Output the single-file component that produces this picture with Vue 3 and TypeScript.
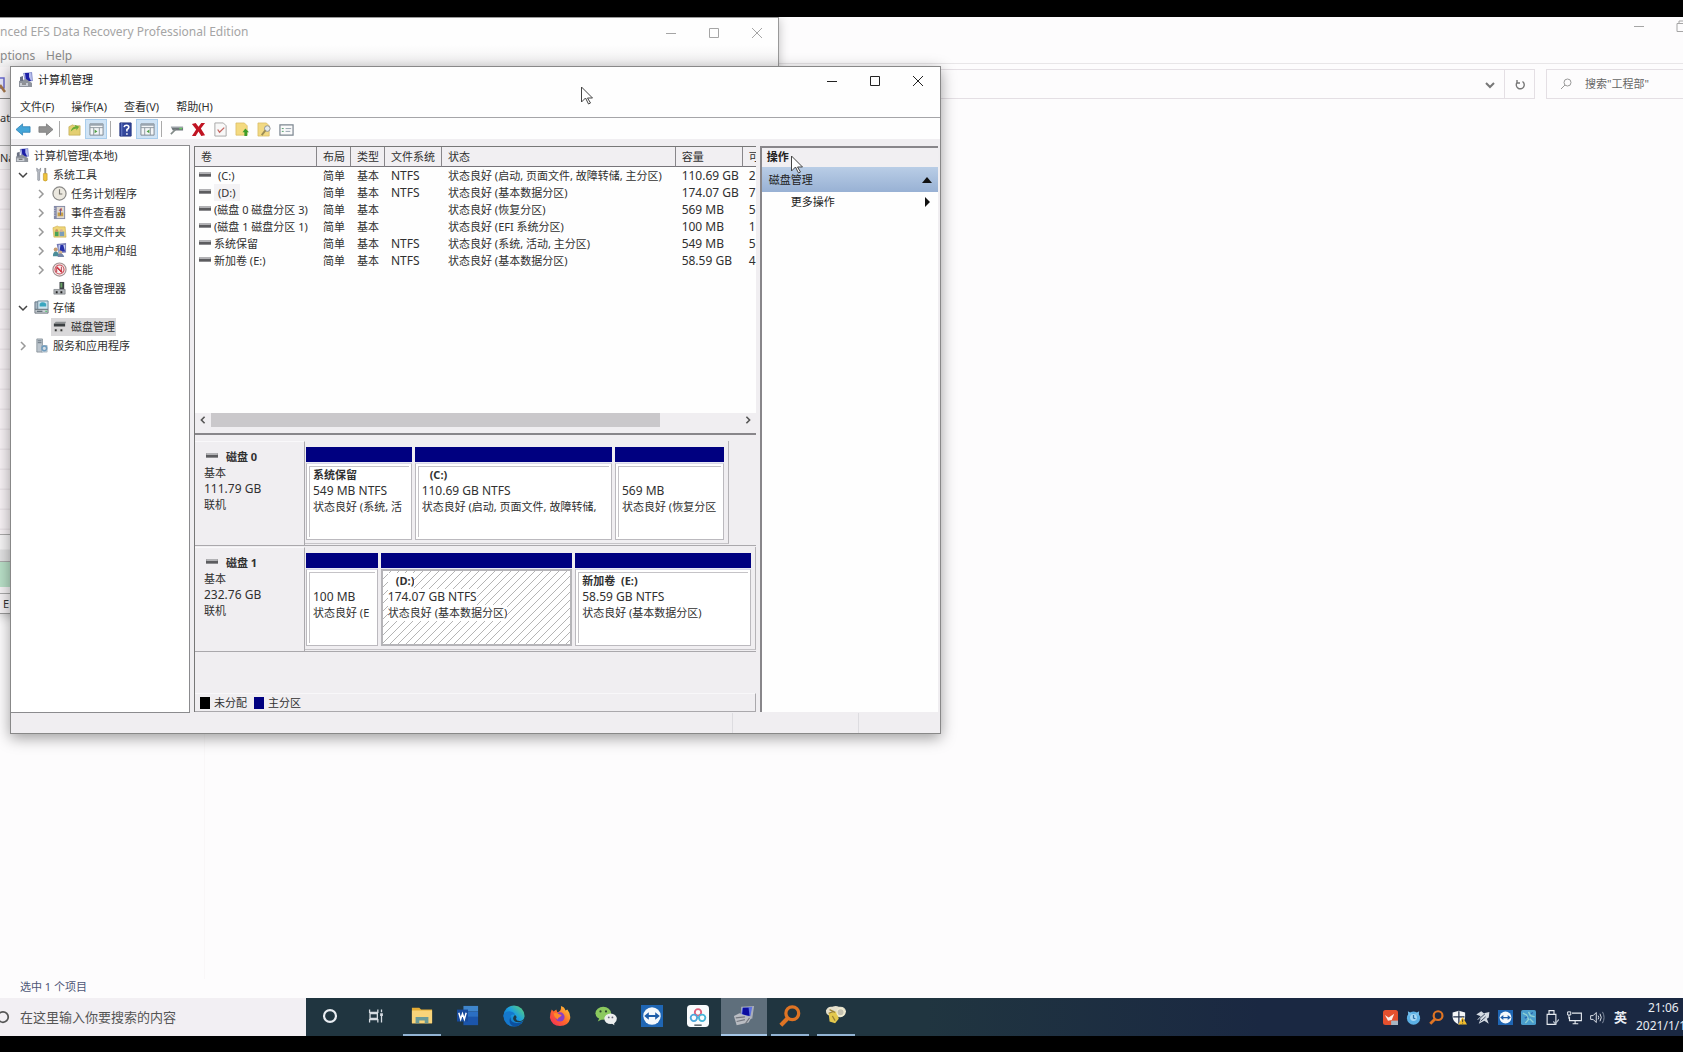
<script setup lang="ts">
interface TreeNode { label: string; icon: string; level: number; state: 'open' | 'closed' | 'none'; selected?: boolean }
interface Volume { name: string; indent?: boolean; hot?: boolean; fs: string; status: string; size: string; free: string }
interface Partition { title: string; pad?: boolean; size: string; status: string; weight: number; selected?: boolean }
interface Disk { name: string; size: string; width: string; parts: Partition[] }
interface App { name: string; icon: string; state?: 'running' | 'active' }

const tree: TreeNode[] = [
  { label: '计算机管理(本地)', icon: 'i-mgmt', level: 0, state: 'none' },
  { label: '系统工具', icon: 'i-tools', level: 1, state: 'open' },
  { label: '任务计划程序', icon: 'i-clock', level: 2, state: 'closed' },
  { label: '事件查看器', icon: 'i-event', level: 2, state: 'closed' },
  { label: '共享文件夹', icon: 'i-share', level: 2, state: 'closed' },
  { label: '本地用户和组', icon: 'i-users', level: 2, state: 'closed' },
  { label: '性能', icon: 'i-perf', level: 2, state: 'closed' },
  { label: '设备管理器', icon: 'i-device', level: 2, state: 'none' },
  { label: '存储', icon: 'i-storage', level: 1, state: 'open' },
  { label: '磁盘管理', icon: 'i-diskmgmt', level: 2, state: 'none', selected: true },
  { label: '服务和应用程序', icon: 'i-services', level: 1, state: 'closed' },
]

const volumes: Volume[] = [
  { name: '(C:)', indent: true, fs: 'NTFS', status: '状态良好 (启动, 页面文件, 故障转储, 主分区)', size: '110.69 GB', free: '2' },
  { name: '(D:)', indent: true, hot: true, fs: 'NTFS', status: '状态良好 (基本数据分区)', size: '174.07 GB', free: '7' },
  { name: '(磁盘 0 磁盘分区 3)', fs: '', status: '状态良好 (恢复分区)', size: '569 MB', free: '5' },
  { name: '(磁盘 1 磁盘分区 1)', fs: '', status: '状态良好 (EFI 系统分区)', size: '100 MB', free: '1' },
  { name: '系统保留', fs: 'NTFS', status: '状态良好 (系统, 活动, 主分区)', size: '549 MB', free: '5' },
  { name: '新加卷 (E:)', fs: 'NTFS', status: '状态良好 (基本数据分区)', size: '58.59 GB', free: '4' },
]

const disks: Disk[] = [
  {
    name: '磁盘 0', size: '111.79 GB', width: '94%',
    parts: [
      { title: '系统保留', size: '549 MB NTFS', status: '状态良好 (系统, 活', weight: 106 },
      { title: '(C:)', pad: true, size: '110.69 GB NTFS', status: '状态良好 (启动, 页面文件, 故障转储,', weight: 198 },
      { title: '', size: '569 MB', status: '状态良好 (恢复分区', weight: 109 },
    ],
  },
  {
    name: '磁盘 1', size: '232.76 GB', width: '100%',
    parts: [
      { title: '', size: '100 MB', status: '状态良好 (E', weight: 72 },
      { title: '(D:)', pad: true, size: '174.07 GB NTFS', status: '状态良好 (基本数据分区)', weight: 192, selected: true },
      { title: '新加卷\u00a0 (E:)', size: '58.59 GB NTFS', status: '状态良好 (基本数据分区)', weight: 176 },
    ],
  },
]

const apps: App[] = [
  { name: 'Cortana', icon: 'i-cortana' },
  { name: '任务视图', icon: 'i-taskview' },
  { name: '文件资源管理器', icon: 'i-explorer', state: 'running' },
  { name: 'Word', icon: 'i-word' },
  { name: 'Edge', icon: 'i-edge' },
  { name: 'Firefox', icon: 'i-firefox' },
  { name: '微信', icon: 'i-wechat' },
  { name: 'TeamViewer', icon: 'i-teamviewer' },
  { name: '网盘', icon: 'i-netdisk' },
  { name: '计算机管理', icon: 'i-mgmt-task', state: 'active' },
  { name: '搜索', icon: 'i-everything', state: 'running' },
  { name: '数据恢复', icon: 'i-keys', state: 'running' },
]

const tray: string[] = ['i-t-red', 'i-t-bird', 'i-everything', 'i-t-shield', 'i-t-gear', 'i-teamviewer', 'i-t-map', 'i-t-usb', 'i-t-net', 'i-t-sound']
const menus: string[] = ['文件(F)', '操作(A)', '查看(V)', '帮助(H)']
</script>

<template>
  <div class="screen">
    <svg class="defs" aria-hidden="true">
      <defs>
        <linearGradient id="g-edge" x1="0" y1="1" x2="1" y2="0"><stop offset="0" stop-color="#0a58b8" /><stop offset=".55" stop-color="#1b9de0" /><stop offset="1" stop-color="#63d86a" /></linearGradient>
        <linearGradient id="g-fox" x1="0" y1="1" x2="1" y2="0"><stop offset="0" stop-color="#f0245e" /><stop offset=".5" stop-color="#ff6a2a" /><stop offset="1" stop-color="#ffd83a" /></linearGradient>
        <pattern id="g-hatch" width="8" height="8" patternUnits="userSpaceOnUse"><path d="M-1 9L9 -1M-1 1L1 -1M7 9L9 7" stroke="#b4b4b4" stroke-width="1" /></pattern>
      </defs>
      <symbol id="i-mgmt" viewBox="0 0 16 16">
        <path d="M5 1l9-1 1 9-8 1z" fill="#8e96cf" /><path d="M6 2l7-1 1 7-6 1z" fill="#b9c0ee" /><path d="M7 1h4v4l2 4H8z" fill="#1c1fa6" />
        <path d="M1 9l7-2 6 4v4H1z" fill="#8f949c" /><path d="M2 11h8v3H2z" fill="#c9cdd3" /><path d="M2 5l3-1v5H2z" fill="#6a7182" /><path d="M4 12h4" stroke="#555" />
      </symbol>
      <symbol id="i-tools" viewBox="0 0 16 16">
        <path d="M3 1v3l1 2v8q1 1 2 0V6l1-2V1L6 3H4z" fill="#b9bec6" stroke="#82878f" stroke-width=".7" /><path d="M11 1h2v6h-2z" fill="#909090" /><path d="M10 7h4v7q-2 2-4 0z" fill="#efc33c" stroke="#b88d20" stroke-width=".6" />
      </symbol>
      <symbol id="i-clock" viewBox="0 0 16 16"><circle cx="8" cy="8" r="7" fill="#ebe8df" stroke="#8b8a88" stroke-width="1.3" /><path d="M8 3.500V8.500H11" fill="none" stroke="#77756f" stroke-width="1.200" /></symbol>
      <symbol id="i-event" viewBox="0 0 16 16"><path d="M2 1h12v14H2z" fill="#8288a6" /><path d="M5 2h8v12H5z" fill="#ded9d2" /><path d="M3 3v10" stroke="#e8e8f4" stroke-dasharray="1 1.500" /><path d="M7 6l3-3 1 3z" fill="#d75a49" /><path d="M6 8h6v4H6z" fill="#c79f49" /><path d="M9 4v7" stroke="#555c9a" /></symbol>
      <symbol id="i-share" viewBox="0 0 16 16"><path d="M1 4l5-2 1 1h7l1 11H2z" fill="#efd678" stroke="#c9a848" stroke-width=".6" /><path d="M3 8h4v5H3z" fill="#4aa257" /><path d="M8 8h5v5H8z" fill="#7a9cba" /><circle cx="5" cy="7" r="1.500" fill="#c98f62" /><circle cx="10" cy="7" r="1.500" fill="#d8b292" /></symbol>
      <symbol id="i-users" viewBox="0 0 16 16"><path d="M5 1l10-1v10l-8 1z" fill="#7479b4" /><path d="M7 2h7v7H7z" fill="#c7d0f2" /><path d="M9 2h3l2 7H8z" fill="#2630a8" /><circle cx="4" cy="7" r="2.200" fill="#c59b73" /><path d="M1 14q0-5 3-5t4 5z" fill="#4b8d99" /><circle cx="9" cy="10" r="2" fill="#d5b48e" /><path d="M6 15q0-4 3-4t4 4z" fill="#7486a8" /></symbol>
      <symbol id="i-perf" viewBox="0 0 16 16"><circle cx="8" cy="8" r="7" fill="#f7eeee" stroke="#a28f90" stroke-width="1.200" /><circle cx="8" cy="8" r="4.800" fill="none" stroke="#c84a55" stroke-width="1.200" /><path d="M5 11V6l5 5V5" fill="none" stroke="#b93643" /><path d="M5 5l6 6" stroke="#d3323f" stroke-width="1.300" /></symbol>
      <symbol id="i-device" viewBox="0 0 16 16"><path d="M8 1h5v8H8z" fill="#3e4346" /><path d="M9 2h2v5H9z" fill="#68a064" /><path d="M2 9h12v5H2z" fill="#b2b6ba" stroke="#74787c" stroke-width=".7" /><path d="M4 11h2v2H4zM9 11h2v2H9z" fill="#222" /></symbol>
      <symbol id="i-storage" viewBox="0 0 16 16"><path d="M1 2h10v8H1z" fill="#a9b8c4" stroke="#637483" /><path d="M4 1h11v9H4z" fill="#cfe4ee" stroke="#6c8595" /><path d="M6 4q3-3 7 0v3H6z" fill="#39a6bf" /><path d="M1 10h14v4H1z" fill="#c9cfd4" stroke="#6d767e" /><path d="M3 12h6" stroke="#3c4a55" /><path d="M12 12h2" stroke="#3ec35b" /></symbol>
      <symbol id="i-diskmgmt" viewBox="0 0 16 16"><path d="M4 3h11l-1 2H2z" fill="#8c8f92" /><path d="M2 5h12v3H2z" fill="#3c4043" /><path d="M2 10h10v4H2z" fill="#d1d1d1" /><path d="M3 11h2v2H3zM9 11h2v2H9z" fill="#333" /></symbol>
      <symbol id="i-services" viewBox="0 0 16 16"><path d="M3 1h6v14H3z" fill="#bcc5cd" stroke="#7d8891" stroke-width=".8" /><path d="M4 3h4M4 5h4" stroke="#66737e" /><path d="M8 8h6v7H8z" fill="#d4dde4" stroke="#8697a5" stroke-width=".6" /><circle cx="11" cy="11" r="2.500" fill="none" stroke="#6f9cbe" stroke-width="1.600" /></symbol>
      <symbol id="i-drive" viewBox="0 0 12 6"><path d="M1 0h10l1 1v4H0V1z" fill="#5c5c5f" /><path d="M1 0h10l1 2H0z" fill="#b2b2b5" /><path d="M0 4h12v1H0z" fill="#8d8d90" /></symbol>
      <symbol id="i-back" viewBox="0 0 16 16"><path d="M0 8l7-6v3h8v6H7v3z" fill="#44a5d8" stroke="#2a7db2" stroke-width=".8" /></symbol>
      <symbol id="i-fwd" viewBox="0 0 16 16"><path d="M16 8L9 2v3H1v6h8v3z" fill="#929292" stroke="#747474" stroke-width=".8" /></symbol>
      <symbol id="i-up" viewBox="0 0 16 16"><path d="M2 5l4-2 2 1h6v10H2z" fill="#e4cf72" stroke="#b8a04a" stroke-width=".6" /><path d="M4 10q1-5 5-5L8 3l5 2-3 4V7Q7 7 4 10z" fill="#69ac35" /></symbol>
      <symbol id="i-pane" viewBox="0 0 16 16"><path d="M1 2h14v12H1z" fill="#f3f5f7" stroke="#7d8790" /><path d="M1 2h14v2H1z" fill="#9aa5af" /><path d="M5 6v8M11 6v8M1 6h14" stroke="#8e979f" /><path d="M7 10l3-2v4z" fill="#4e9f44" /></symbol>
      <symbol id="i-pane-r" viewBox="0 0 16 16"><path d="M1 2h14v12H1z" fill="#f3f5f7" stroke="#7d8790" /><path d="M1 2h14v2H1z" fill="#9aa5af" /><path d="M5 6v8M11 6v8M1 6h14" stroke="#8e979f" /><path d="M9 10L6 8v4z" fill="#4e9f44" /></symbol>
      <symbol id="i-help" viewBox="0 0 16 16"><path d="M2 1h12v14H2z" fill="#34489d" stroke="#24357f" /><path d="M4 1v14" stroke="#7183cd" /><path d="M6.500 5.500Q7 3.500 9 3.500q2.500 0 2.500 2Q11.500 7 9.500 8v2M9.500 12v1.500" fill="none" stroke="#fff" stroke-width="1.700" /></symbol>
      <symbol id="i-connect" viewBox="0 0 16 16"><path d="M2 5h13v4H4z" fill="#6f767a" /><path d="M2 5h13v1H2z" fill="#b6bcc0" /><path d="M2 13l5-5" stroke="#828a88" stroke-width="1.800" /><path d="M11 7h3" stroke="#67cf63" stroke-width="1.500" /></symbol>
      <symbol id="i-del" viewBox="0 0 16 16"><path d="M1 2l4-1 3 4 3-4h4l-4.500 6L15 14l-4 1-3-5-3 5H1l4.500-7z" fill="#c01422" /></symbol>
      <symbol id="i-page" viewBox="0 0 16 16"><path d="M2 1h9l3 3v11H2z" fill="#f8f8f8" stroke="#a5a5a5" /><path d="M5 8l2 3 5-5" fill="none" stroke="#c56661" stroke-width="1.400" /></symbol>
      <symbol id="i-folderup" viewBox="0 0 16 16"><path d="M1 1h9l3 3v10H1z" fill="#f4da80" stroke="#d5b65a" stroke-width=".7" /><path d="M11 7l4 4h-2v4h-3v-4H8z" fill="#3f9d2a" /></symbol>
      <symbol id="i-folderfind" viewBox="0 0 16 16"><path d="M1 1h9l3 3v11H1z" fill="#f1d983" stroke="#d5b65a" stroke-width=".7" /><circle cx="11" cy="7" r="3" fill="#e4ebef" stroke="#8b8f92" /><path d="M9 9l-4 5" stroke="#9b8c55" stroke-width="2" /></symbol>
      <symbol id="i-list" viewBox="0 0 16 16"><path d="M1 3h14v11H1z" fill="#fafafa" stroke="#7c8690" stroke-width="1.300" /><path d="M3 7h2M3 10h2" stroke="#4d9b65" /><path d="M7 7h6M7 10h5" stroke="#92a0ad" /></symbol>
      <symbol id="i-cursor" viewBox="0 0 12 20"><path d="M1 1v15l4-4 3 6 2-1-3-5h5z" fill="#fff" stroke="#444" stroke-width="1" /></symbol>

      <symbol id="i-cortana" viewBox="0 0 24 24"><circle cx="12" cy="12" r="6.500" fill="none" stroke="#e9edf2" stroke-width="2.400" /></symbol>
      <symbol id="i-taskview" viewBox="0 0 24 24"><path d="M5 5v3h9V5M5 19v-3h9v3M5.500 9.500h8v5h-8zM18 5v3M18 12v7" fill="none" stroke="#d6dce2" stroke-width="1.400" /><path d="M16.500 9h3v3h-3z" fill="#d6dce2" /></symbol>
      <symbol id="i-explorer" viewBox="0 0 24 24"><path d="M1 3h8l2 2h12v15H1z" fill="#e5ad35" /><path d="M1 6h22v14H1z" fill="#f8d47a" /><path d="M5 13h14v7h-4v-3H9v3H5z" fill="#6a9a98" /></symbol>
      <symbol id="i-word" viewBox="0 0 24 24"><path d="M7 1h16v6H7z" fill="#3f86cc" /><path d="M7 7h16v6H7z" fill="#2b6fc3" /><path d="M7 13h16v9H7z" fill="#1b55ab" /><path d="M0 5h12v13H0z" fill="#174a9c" /><path d="M2 8.500l2 7 2-6 2 6 2-7" fill="none" stroke="#fff" stroke-width="1.600" /></symbol>
      <symbol id="i-edge" viewBox="0 0 24 24">
        <circle cx="12" cy="12" r="11.500" fill="url(#g-edge)" />
        <path d="M.5 11Q3 6.500 8 7q5 .5 5 4-4-2-5 2-1 6 6 9.500Q2 25 .5 11z" fill="#1578cc" />
        <path d="M8 13q0 7 8 6.500 3-.5 6-2Q18 24 12 23.500 5 21 8 13z" fill="#0c4f9e" />
        <path d="M13 11q3 2 1 4 1 3 5 2.500 4-1 4.500-5L23 17q-6 3-10 1-4-3 0-7z" fill="#1f3a46" />
      </symbol>
      <symbol id="i-firefox" viewBox="0 0 24 24"><path d="M3 5l2 2 3-2 1 3q5-1 4-7 4 1 5 5l2-1q4 5 3 10-2 8-11 8T1 14q0-5 2-9z" fill="url(#g-fox)" /><circle cx="12" cy="13" r="5" fill="#8b3fc4" /><path d="M5 9q4-1 6 1l3 1-2 2q-3 1-2 3-4-1-5-7z" fill="#ff8a2a" /></symbol>
      <symbol id="i-wechat" viewBox="0 0 24 24"><ellipse cx="9" cy="9" rx="8.500" ry="7" fill="#8bc95e" /><path d="M3 18l2-4 4 1z" fill="#8bc95e" /><ellipse cx="17" cy="15" rx="6.800" ry="5.800" fill="#eceeee" /><path d="M21 22l-3-2 3-2z" fill="#eceeee" /><circle cx="6" cy="7" r="1.200" fill="#2d4a2c" /><circle cx="12" cy="7" r="1.200" fill="#2d4a2c" /><circle cx="15" cy="13.500" r="1" fill="#667" /><circle cx="19" cy="13.500" r="1" fill="#667" /></symbol>
      <symbol id="i-teamviewer" viewBox="0 0 24 24"><path d="M0 0h24v24H0z" fill="#1f66b4" /><circle cx="12" cy="12" r="9.500" fill="#f4f8fc" /><path d="M3.500 12l5-4v3h7V8l5 4-5 4v-3h-7v3z" fill="#1d5ca8" /></symbol>
      <symbol id="i-netdisk" viewBox="0 0 24 24"><rect x="0" y="0" width="24" height="24" rx="4" fill="#f9fbfd" /><g fill="none" stroke-width="2"><circle cx="12" cy="8" r="3.500" stroke="#e0607c" /><circle cx="7.500" cy="14" r="3.500" stroke="#4aa6dc" /><circle cx="16.500" cy="14" r="3.500" stroke="#46b5d8" /></g><path d="M8 22h8" stroke="#44505a" stroke-width="1.500" /></symbol>
      <symbol id="i-mgmt-task" viewBox="0 0 24 24"><path d="M9 2l14-1-2 14-13-1z" fill="#a9adb8" /><path d="M10 3l11-1-2 10-10-1z" fill="#5d71e0" /><path d="M11 3h6l1 9-8-2z" fill="#0b0c9e" /><path d="M1 12l6-3 13 5-3 5-13 3z" fill="#b9bcc2" /><path d="M3 14l10-1M4 18l9-2M13 21l5-7" stroke="#73777f" stroke-width="1.300" /></symbol>
      <symbol id="i-everything" viewBox="0 0 24 24"><circle cx="14.500" cy="9" r="7" fill="none" stroke="#df7424" stroke-width="3.500" /><path d="M10 14l-8 8" stroke="#df7424" stroke-width="4.500" /></symbol>
      <symbol id="i-keys" viewBox="0 0 24 24"><path d="M1 6q2-5 7-4 4-2 7 0 7-1 8 5-1 5-5 6-3 1-5-1H6Q1 11 1 6z" fill="#e4dfcb" /><path d="M4 9l9-2 2 8-4 5-6-2z" fill="#e3c84d" /><circle cx="17" cy="8" r="4" fill="#c4c1b1" stroke="#f1edd2" stroke-width="1.500" /><path d="M5 5l6 3M4 9l6-2M8 12l3 5" stroke="#9c8334" stroke-width="1.400" /></symbol>
      <symbol id="i-t-red" viewBox="0 0 24 24"><rect x="0" y="0" width="24" height="24" rx="4" fill="#e4502e" /><path d="M3 8l6 4 9-6-4 10-6 1z" fill="#fbeee9" /><path d="M13 17h11v7H13z" fill="#a8b6c4" /></symbol>
      <symbol id="i-t-bird" viewBox="0 0 24 24"><circle cx="12" cy="13" r="10.500" fill="#5cb0e4" /><path d="M3 2l7 4-6 4zM21 2l-7 4 6 4z" fill="#74c0ee" /><circle cx="12" cy="12" r="5.500" fill="#a9d8f4" /><path d="M12 8v5l3 1" stroke="#2b6fa8" stroke-width="2" fill="none" /></symbol>
      <symbol id="i-t-shield" viewBox="0 0 24 24"><path d="M11 1l10 3v7q0 8-10 12Q1 19 1 11V4z" fill="#f5f6f8" /><path d="M11 2v20M2 11h18" stroke="#22304a" stroke-width="2" /><path d="M17 11l7 12H10z" fill="#f2bd2c" /><path d="M17 15v4M17 20.500v1" stroke="#333" stroke-width="1.600" /></symbol>
      <symbol id="i-t-gear" viewBox="0 0 24 24"><path d="M2 7l8-5 4 3 9-2-1 9-3 2 3 8-7-5-9 5 3-8-6 2 6-6z" fill="#d4dae2" /><path d="M6 15l10-9M9 18l8-7" stroke="#2b3a55" stroke-width="1.400" /></symbol>
      <symbol id="i-t-map" viewBox="0 0 24 24"><rect x="0" y="0" width="24" height="24" rx="3" fill="#4a9dcc" /><path d="M3 5l6 3 3 7-5 6M12 3l3 6 7 2M14 14l6 6" stroke="#8fd0d4" stroke-width="2.200" fill="none" /><path d="M6 13l4-2M16 6l3-2" stroke="#2a62ae" stroke-width="2" /></symbol>
      <symbol id="i-t-usb" viewBox="0 0 24 24"><path d="M8 1h8v6H8zM5 7h14v16H5z" fill="none" stroke="#e6eaf0" stroke-width="1.800" /><path d="M15 18l3 4 6-7" fill="none" stroke="#b9c2ce" stroke-width="2" /></symbol>
      <symbol id="i-t-net" viewBox="0 0 24 24"><path d="M8 5h15v12H4v-6M13 17v5M9 22h9" fill="none" stroke="#e6eaf0" stroke-width="1.800" /><path d="M1 3h5v5H1zM3 8v6" fill="none" stroke="#e6eaf0" stroke-width="1.600" /></symbol>
      <symbol id="i-t-sound" viewBox="0 0 24 24"><path d="M1 9h4l5-5v16l-5-5H1z" fill="none" stroke="#e6eaf0" stroke-width="1.500" /><path d="M13 9q2 3 0 6M16 6q4 6 0 12" fill="none" stroke="#e6eaf0" stroke-width="1.500" /><path d="M20 3q5 9 0 18" fill="none" stroke="#8792a4" stroke-width="1.500" /></symbol>
    </svg>

    <main class="desktop">
      <section class="explorer" aria-label="文件资源管理器">
        <div class="ex-title">
          <button class="ex-ctl" aria-label="最小化"><svg viewBox="0 0 12 12"><path d="M1 6.500h10" /></svg></button>
          <button class="ex-ctl" aria-label="还原"><svg viewBox="0 0 12 12"><path d="M1 3.500h8v8H1zM3 3V1h8v8H9" /></svg></button>
        </div>
        <div class="ex-nav">
          <div class="address">
            <input class="address-input" aria-label="地址" />
            <button class="nav-btn" aria-label="展开"><svg viewBox="0 0 12 12"><path d="M2 4l4 4 4-4" stroke-width="2" /></svg></button>
            <button class="nav-btn refresh" aria-label="刷新"><svg viewBox="0 0 12 12"><path d="M8.500 2.500A4 4 0 1 1 3 3.500M3 1v3h3" stroke-width="1.400" /></svg></button>
          </div>
          <div class="ex-search">
            <svg viewBox="0 0 12 12"><circle cx="7.500" cy="4.500" r="3.500" /><path d="M5 7l-4 4" /></svg>
            <input placeholder="搜索&quot;工程部&quot;" aria-label="搜索" />
          </div>
        </div>
        <div class="ex-body"><div class="ex-side"></div></div>
        <footer class="ex-status">选中 1 个项目</footer>
      </section>

      <section class="efs" aria-label="EFS Data Recovery">
        <header class="efs-title">
          <span class="efs-name">nced EFS Data Recovery Professional Edition</span>
          <span class="controls">
            <button aria-label="最小化"><svg viewBox="0 0 12 12"><path d="M1 6.500h10" /></svg></button>
            <button aria-label="最大化"><svg viewBox="0 0 12 12"><path d="M1.500 1.500h9v9h-9z" /></svg></button>
            <button aria-label="关闭"><svg viewBox="0 0 12 12"><path d="M1 1l10 10M11 1L1 11" /></svg></button>
          </span>
        </header>
        <nav class="efs-menu"><button class="efs-opt">ptions</button><button>Help</button></nav>
        <div class="efs-tools"><svg viewBox="0 0 6 16"><path d="M0 1h4v10H0" fill="#e8e8fb" stroke="#6a6ad0" stroke-width="1.500" /><path d="M0 8l5 7" stroke="#a5764a" stroke-width="2.500" /></svg></div>
        <div class="efs-row state">ate</div>
        <div class="efs-row head">Na</div>
        <div class="efs-grid"></div>
        <div class="efs-gap"></div>
        <div class="efs-progress"></div>
        <div class="efs-foot">E</div>
      </section>

      <section class="win" aria-label="计算机管理">
        <header class="title">
          <svg class="ico16"><use href="#i-mgmt" /></svg>
          <h1>计算机管理</h1>
          <span class="controls">
            <button aria-label="最小化"><svg viewBox="0 0 12 12"><path d="M1 6.500h10" /></svg></button>
            <button aria-label="最大化"><svg viewBox="0 0 12 12"><path d="M1.500 1.500h9v9h-9z" /></svg></button>
            <button aria-label="关闭"><svg viewBox="0 0 12 12"><path d="M1 1l10 10M11 1L1 11" /></svg></button>
          </span>
        </header>
        <nav class="menu"><button v-for="m in menus" :key="m">{{ m }}</button></nav>
        <div class="tools">
          <button aria-label="后退"><svg><use href="#i-back" /></svg></button>
          <button aria-label="前进"><svg><use href="#i-fwd" /></svg></button>
          <i></i>
          <button aria-label="上一级"><svg><use href="#i-up" /></svg></button>
          <button class="on" aria-label="显示控制台树"><svg><use href="#i-pane-r" /></svg></button>
          <i></i>
          <button aria-label="帮助"><svg><use href="#i-help" /></svg></button>
          <button class="on" aria-label="显示操作窗格"><svg><use href="#i-pane" /></svg></button>
          <i></i>
          <button aria-label="连接"><svg><use href="#i-connect" /></svg></button>
          <button aria-label="删除"><svg><use href="#i-del" /></svg></button>
          <button aria-label="属性"><svg><use href="#i-page" /></svg></button>
          <button aria-label="打开"><svg><use href="#i-folderup" /></svg></button>
          <button aria-label="浏览"><svg><use href="#i-folderfind" /></svg></button>
          <button aria-label="列表"><svg><use href="#i-list" /></svg></button>
        </div>

        <div class="panes">
          <ul class="tree">
            <li v-for="n in tree" :key="n.label" :class="['lv' + n.level, { sel: n.selected }]">
              <button v-if="n.state !== 'none'" class="exp" :class="n.state" :aria-label="n.label">
                <svg viewBox="0 0 10 10"><path :d="n.state === 'open' ? 'M1 3l4 4 4-4' : 'M3 1l4 4-4 4'" /></svg>
              </button>
              <span v-else-if="n.level > 0" class="exp"></span>
              <span class="node"><svg class="ico14"><use :href="'#' + n.icon" /></svg><span>{{ n.label }}</span></span>
            </li>
          </ul>

          <div class="center">
            <div class="list">
              <table>
                <colgroup><col class="c-name" /><col class="c-short" /><col class="c-short" /><col class="c-fs" /><col /><col class="c-size" /><col class="c-free" /></colgroup>
                <thead><tr><th>卷</th><th>布局</th><th>类型</th><th>文件系统</th><th>状态</th><th>容量</th><th>可</th></tr></thead>
                <tbody>
                  <tr v-for="v in volumes" :key="v.name">
                    <td class="name"><svg class="drive"><use href="#i-drive" /></svg><span :class="{ indent: v.indent, hot: v.hot }">{{ v.name }}</span></td>
                    <td>简单</td><td>基本</td><td class="num">{{ v.fs }}</td><td>{{ v.status }}</td><td class="num">{{ v.size }}</td><td class="num">{{ v.free }}</td>
                  </tr>
                </tbody>
              </table>
            </div>
            <div class="hscroll">
              <button aria-label="向左"><svg viewBox="0 0 10 10"><path d="M7 1L3 5l4 4" /></svg></button>
              <div class="track"><div class="thumb"></div></div>
              <button aria-label="向右"><svg viewBox="0 0 10 10"><path d="M3 1l4 4-4 4" /></svg></button>
            </div>
            <div class="split"></div>
            <div class="disks">
              <div v-for="d in disks" :key="d.name" class="disk">
                <div class="disk-label">
                  <div class="disk-name"><svg class="drive"><use href="#i-drive" /></svg><b>{{ d.name }}</b></div>
                  <div>基本</div><div class="num">{{ d.size }}</div><div>联机</div>
                </div>
                <div class="graph-area">
                  <div class="graph" :style="{ width: d.width }">
                    <div v-for="(p, k) in d.parts" :key="k" class="part" :style="{ flexGrow: p.weight }">
                      <div class="bar"></div>
                      <div class="box" :class="{ picked: p.selected }">
                        <svg v-if="p.selected" class="hatch" aria-hidden="true"><rect width="100%" height="100%" fill="url(#g-hatch)" /></svg>
                        <div class="lines"><b :class="{ pad: p.pad }">{{ p.title }}</b><span class="num">{{ p.size }}</span><span>{{ p.status }}</span></div>
                      </div>
                    </div>
                  </div>
                </div>
              </div>
            </div>
            <div class="legend"><i class="black"></i><span>未分配</span><i class="navy"></i><span>主分区</span></div>
          </div>

          <aside class="actions">
            <h2>操作</h2>
            <button class="group"><span>磁盘管理</span><svg viewBox="0 0 10 10"><path d="M0 8l5-6 5 6z" /></svg></button>
            <button class="more"><span>更多操作</span><svg viewBox="0 0 10 10"><path d="M3 0l5 5-5 5z" /></svg></button>
          </aside>
        </div>
        <footer class="status"><span></span><span class="s2"></span><span class="s3"></span></footer>
        <svg class="cursor one"><use href="#i-cursor" /></svg>
        <svg class="cursor two"><use href="#i-cursor" /></svg>
      </section>
    </main>

    <footer class="taskbar">
      <label class="tb-search"><svg viewBox="0 0 12 12"><circle cx="6" cy="6" r="4.500" /></svg><input placeholder="在这里输入你要搜索的内容" aria-label="搜索" /></label>
      <div class="apps">
        <button v-for="a in apps" :key="a.name" :class="a.state" :aria-label="a.name"><svg><use :href="'#' + a.icon" /></svg></button>
      </div>
      <div class="tray">
        <button v-for="t in tray" :key="t" :aria-label="t"><svg><use :href="'#' + t" /></svg></button>
        <button class="ime">英</button>
        <div class="clock"><time>21:06</time><span>2021/1/1</span></div>
      </div>
    </footer>
  </div>
</template>

<style>
html, body { margin: 0; background: #000; overflow: hidden; }
</style>

<style scoped>
* { box-sizing: border-box; }
.screen { display: flex; flex-direction: column; min-height: 100vh; padding: 17px 0 16px; overflow: hidden; background: #000; color: #303030; font: 11px/16px "Noto Sans", "Noto Sans CJK SC", sans-serif; }
.defs { position: absolute; width: 0; height: 0; }
button { margin: 0; padding: 0; border: 0; background: none; color: inherit; font: inherit; white-space: nowrap; }
input { min-width: 0; padding: 0; border: 0; outline: 0; background: none; font: inherit; }
.num { font-size: 12px; }
.desktop { position: relative; flex: 1; display: flex; overflow: hidden; background: #fdfdfd; }

.explorer { flex: 1; min-width: 0; display: flex; flex-direction: column; background: #fdfcfd; }
.ex-title { display: flex; justify-content: flex-end; align-items: center; height: 46px; padding-bottom: 24px; margin-right: -20px; }
.ex-ctl { width: 43px; height: 20px; }
.ex-ctl svg { width: 12px; height: 12px; fill: none; stroke: #a5a5a5; }
.ex-nav { display: flex; gap: 11px; padding-top: 5px; border-top: 1px solid #e8e6e8; height: 36px; }
.address { flex: 1; display: flex; height: 30px; border: 1px solid #e4dfe4; }
.address-input { flex: 1; }
.nav-btn { width: 28px; }
.refresh { width: 30px; border-left: 1px solid #e4dfe4; }
.nav-btn svg { width: 12px; height: 12px; fill: none; stroke: #777; vertical-align: middle; }
.ex-search { display: flex; align-items: center; gap: 13px; width: 137px; height: 30px; padding-left: 13px; border: 1px solid #e4dfe4; border-right: 0; }
.ex-search svg { flex: none; width: 12px; height: 12px; fill: none; stroke: #999; }
.ex-search input::placeholder { color: #666; opacity: 1; }
.ex-body { flex: 1; display: flex; }
.ex-side { width: 205px; border-right: 1px solid #f9f7f8; }
.ex-status { padding-left: 20px; height: 19px; color: #4d5676; }

.controls { display: flex; margin-left: auto; }
.controls button { width: 43px; height: 24px; }
.controls svg { width: 12px; height: 12px; fill: none; stroke: currentColor; vertical-align: middle; }

.efs { position: absolute; left: 0; top: 0; width: calc(46vw + 5px); height: 597px; display: flex; flex-direction: column; border: 1px solid #999; border-left: 0; background: #f6f3f5; color: #8a8a8a; box-shadow: 0 2px 10px rgba(0, 0, 0, .25); }
.efs-title { display: flex; align-items: center; height: 27px; background: #fefefe; color: #a5a5a5; }
.efs-name { white-space: nowrap; font-size: 12px; }
.efs-menu { display: flex; gap: 14px; height: 22px; background: linear-gradient(#fefefe, #f0eff0); font-size: 12px; }
.efs-opt { width: 32px; text-align: right; }
.efs-tools { height: 32px; padding-top: 10px; border-bottom: 1px solid #888; }
.efs-tools svg { display: block; width: 6px; height: 16px; }
.efs-row { padding-top: 11px; height: 47px; border-bottom: 1px solid #aaa; color: #333; }
.efs-row.head { height: 24px; padding-top: 4px; border-bottom: 1px solid #e6e0e4; }
.efs-grid { flex: 1; border-bottom: 1px solid #aaa; background: repeating-linear-gradient(#f8f3f6 0 18px, #ece6ea 19px 20px); }
.efs-gap { height: 26px; background: linear-gradient(#f6f5f6 14px, #e2e2e3 15px); }
.efs-progress { height: 26px; background: #b9e0c8; border-top: 1px solid #aaa; }
.efs-foot { height: 20px; margin-top: 6px; padding: 2px 0 0 3px; border-top: 1px solid #aaa; color: #333; }

.win { position: absolute; left: 10px; top: 49px; width: calc(55vw + 5px); border: 1px solid #888; background: #f0eef1; box-shadow: 0 4px 14px rgba(0, 0, 0, .38); }
.title { display: flex; align-items: center; height: 30px; padding: 0 0 4px 7px; background: #fefefe; color: #222; }
.ico16 { width: 16px; height: 16px; }
h1 { margin: 0 0 0 4px; font: inherit; }
.menu { display: flex; gap: 17px; height: 20px; padding-left: 9px; background: #fefefe; }
.tools { display: flex; align-items: center; height: 22px; padding: 1px 0 0 1px; border-top: 1px solid #a5a5a8; background: #fefefe; }
.tools button { display: flex; justify-content: center; align-items: center; width: 22px; height: 20px; }
.tools svg { width: 15px; height: 15px; }
.tools .on { background: #cfe3f5; border: 1px solid #a9cdec; }
.tools i { width: 1px; height: 16px; margin: 0 3px; background: #aaa; }

.panes { display: flex; margin-top: 6px; min-height: 568px; }
.tree { flex: none; width: 179px; margin: 0; padding: 0; list-style: none; border: 1px solid #8b8b8e; border-left: 0; background: #fff; }
.tree li { display: flex; align-items: center; height: 19px; padding-left: 3px; }
.tree .lv1 { gap: 3px; padding-left: 4px; }
.tree .lv2 { gap: 3px; padding-left: 22px; }
.node { display: flex; align-items: center; gap: 4px; height: 18px; padding: 0 1px; white-space: nowrap; }
.sel .node { background: #d9d8da; }
.ico14 { width: 15px; height: 15px; }
.exp { width: 15px; height: 15px; display: flex; align-items: center; justify-content: center; }
.exp svg { width: 10px; height: 10px; fill: none; stroke: #999; stroke-width: 1.500; }
.exp.open svg { stroke: #444; }

.center { flex: 1; min-width: 0; display: flex; flex-direction: column; margin: 1px 4px 1px 4px; border-top: 1px solid #777; border-left: 1px solid #777; }
.list { height: 266px; background: #fefefe; }
table { width: 100%; table-layout: fixed; border-collapse: separate; border-spacing: 0; }
.c-name { width: 122px; } .c-short { width: 34px; } .c-fs { width: 57px; } .c-size { width: 67px; } .c-free { width: 13px; }
th, td { padding: 0 0 0 6px; overflow: hidden; white-space: nowrap; text-align: left; font-weight: 400; }
th { height: 20px; padding-top: 1px; border-right: 1px solid #88868a; border-bottom: 1px solid #77757a; background: #f1eff2; line-height: 18px; }
th:last-child { border-right: 0; }
td { height: 17px; line-height: 17px; }
td.name { padding-left: 4px; }
.drive { width: 12px; height: 6px; margin-right: 3px; vertical-align: 2px; }
.indent { padding: 0 4px; }
.hot { display: inline-block; background: #f4f3f5; }
.hscroll { display: flex; height: 14px; background: #f0eef1; }
.hscroll button { width: 16px; display: flex; align-items: center; justify-content: center; }
.hscroll svg { width: 8px; height: 8px; fill: none; stroke: #555; stroke-width: 2; }
.track { flex: 1; }
.thumb { width: 85%; height: 14px; background: #cac8cb; }
.split { height: 8px; border-bottom: 2px solid #88868a; }
.disks { flex: 1; padding-top: 6px; }
.disk { display: flex; height: 105px; margin-bottom: 1px; border-bottom: 1px solid #aaa8ac; }
.disk-label { width: 110px; padding: 7px 0 0 9px; border-right: 1px solid #aaa8ac; border-top: 1px solid #f9f8fa; }
.disk-name { display: flex; align-items: center; }
.disk-name .drive { margin: 0 8px 3px 2px; }
.graph-area { flex: 1; min-width: 0; }
.graph { display: flex; gap: 3px; height: 103px; padding: 6px 4px 3px 1px; border-right: 1px solid #b5b3b7; border-bottom: 1px solid #c5c3c7; }
.part { flex: 1 1 0; min-width: 0; display: flex; flex-direction: column; gap: 1px; background: #e8e8f4; }
.bar { height: 15px; background: #000080; }
.box { position: relative; flex: 1; margin: 0; padding: 2px; border: 1px solid #bbb9be; border-top-color: #d8d8e8; background: #fff; overflow: hidden; }
.lines { position: relative; display: flex; flex-direction: column; height: 100%; padding: 0 2px 0 3px; border-top: 1px solid #c5c3c7; border-left: 1px solid #c5c3c7; }
.lines b, .lines span, .disk-label div { height: 16px; overflow: hidden; white-space: nowrap; }
.lines .pad { padding-left: 8px; }
.picked { padding: 1px; border: 2px solid #b5b4b8; }
.hatch { position: absolute; left: 0; top: 0; width: 100%; height: 100%; }
.picked .lines { border-color: transparent; }
.picked .lines b, .picked .lines span { align-self: flex-start; background: #fff; }
.legend { display: flex; align-items: center; height: 19px; padding-left: 5px; border: solid #aaa8ac; border-width: 0 1px 1px 0; border-top: 1px solid #f8f7f9; }
.legend i { width: 10px; height: 12px; margin-right: 4px; }
.legend span { margin-right: 7px; }
.black { background: #000; }
.navy { background: #000080; }

.actions { flex: none; width: 178px; margin: 1px 2px 1px 0; border-top: 2px solid #88868a; border-left: 2px solid #88868a; background: #fefefe; color: #222; }
h2 { margin: 0; height: 19px; padding-left: 5px; background: #f1eff2; font-size: 11px; line-height: 18px; font-weight: 700; }
.group, .more { display: flex; align-items: center; width: 100%; height: 25px; padding: 0 6px 0 7px; }
.group { background: linear-gradient(#b9cde6, #98b1d4); }
.more { height: 20px; padding-left: 29px; }
.group svg, .more svg { width: 10px; height: 10px; margin-left: auto; fill: #111; }
.status { display: flex; height: 20px; }
.status span { flex: 1; }
.status .s2 { flex: none; width: 126px; border-left: 1px solid #dddce0; }
.status .s3 { flex: none; width: 82px; border-left: 1px solid #dddce0; }
.cursor { position: absolute; width: 13px; height: 20px; }
.cursor.one { left: 569px; top: 19px; }
.cursor.two { left: 779px; top: 88px; }

.taskbar { display: flex; height: 38px; overflow: hidden; background: linear-gradient(90deg, #203540 0%, #203540 55%, #1a2842 75%); }
.tb-search { display: flex; align-items: center; flex: none; width: 310px; margin-left: -4px; background: #f2eff3; }
.tb-search svg { flex: none; width: 14px; height: 14px; margin-right: 10px; fill: none; stroke: #555; stroke-width: 1.500; }
.tb-search input { flex: 1; font-size: 13px; }
.tb-search input::placeholder { color: #555; opacity: 1; }
.apps { display: flex; margin-left: 1px; }
.apps button { display: flex; align-items: center; justify-content: center; width: 38px; margin: 0 4px; border-bottom: 2px solid transparent; }
.apps svg { width: 22px; height: 22px; }
.apps .running { border-color: #92b4d4; }
.apps .active { width: 46px; margin: 0; background: #5f6f7c; border-color: #a5c6e6; }
.tray { display: flex; align-items: center; margin-left: auto; color: #e8ecf2; }
.tray button { display: flex; align-items: center; justify-content: center; width: 23px; height: 24px; }
.tray svg { width: 15px; height: 15px; }
.tray .ime { font-size: 13px; font-weight: 700; }
.clock { display: flex; flex-direction: column; width: 51px; padding-left: 4px; font-size: 12px; line-height: 18px; white-space: nowrap; }
.clock time { padding-left: 12px; }
</style>
